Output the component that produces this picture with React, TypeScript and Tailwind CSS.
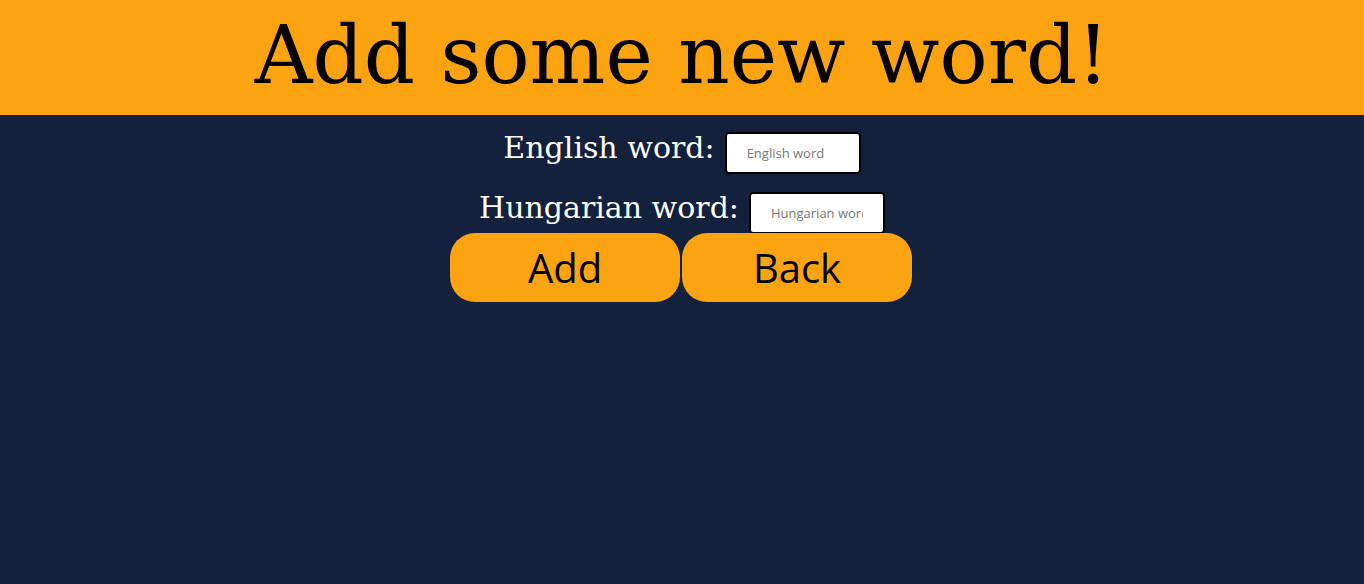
import { useState } from 'react';

function WordField({
  label,
  placeholder,
  value,
  onChange
}: {
  label: string;
  placeholder: string;
  value: string;
  onChange: (v: string) => void;
}) {
  return (
    <div className="flex items-baseline gap-[10px]">
      <label className="font-['DejaVu_Serif',serif] text-[30px] leading-[35px] text-white">
        {label}
      </label>
      <input
        type="text"
        value={value}
        placeholder={placeholder}
        onChange={(e) => onChange(e.target.value)}
        className="h-[42px] w-[136px] rounded-[4px] border-2 border-black bg-white px-5 font-['Open_Sans',sans-serif] text-[13px] text-black placeholder:text-[#757575] focus:outline-none"
      />
    </div>
  );
}

export default function App() {
  const [english, setEnglish] = useState('');
  const [hungarian, setHungarian] = useState('');

  return (
    <div className="min-h-[584px] w-full bg-[#14213d]">
      {/* Header */}
      <header className="flex h-[115px] items-start justify-center bg-[#fca311] pt-[9px]">
        <h1 className="font-['DejaVu_Serif',serif] text-[80px] leading-[93px] font-normal text-black">
          Add some new word!
        </h1>
      </header>

      {/* Form */}
      <main className="flex flex-col items-center pt-[15px]">
        <WordField
          label="English word:"
          placeholder="English word"
          value={english}
          onChange={setEnglish}
        />
        <div className="mt-[16px]">
          <WordField
            label="Hungarian word:"
            placeholder="Hungarian word"
            value={hungarian}
            onChange={setHungarian}
          />
        </div>
        <div className="-mt-[1px] flex gap-[2px] pr-[2px]">
          <button className="flex h-[69px] w-[230px] items-center justify-center rounded-[25px] bg-[#fca311] font-['Open_Sans',sans-serif] text-[40px] text-black">
            Add
          </button>
          <button className="flex h-[69px] w-[230px] items-center justify-center rounded-[25px] bg-[#fca311] font-['Open_Sans',sans-serif] text-[40px] text-black">
            Back
          </button>
        </div>
      </main>
    </div>
  );
}
